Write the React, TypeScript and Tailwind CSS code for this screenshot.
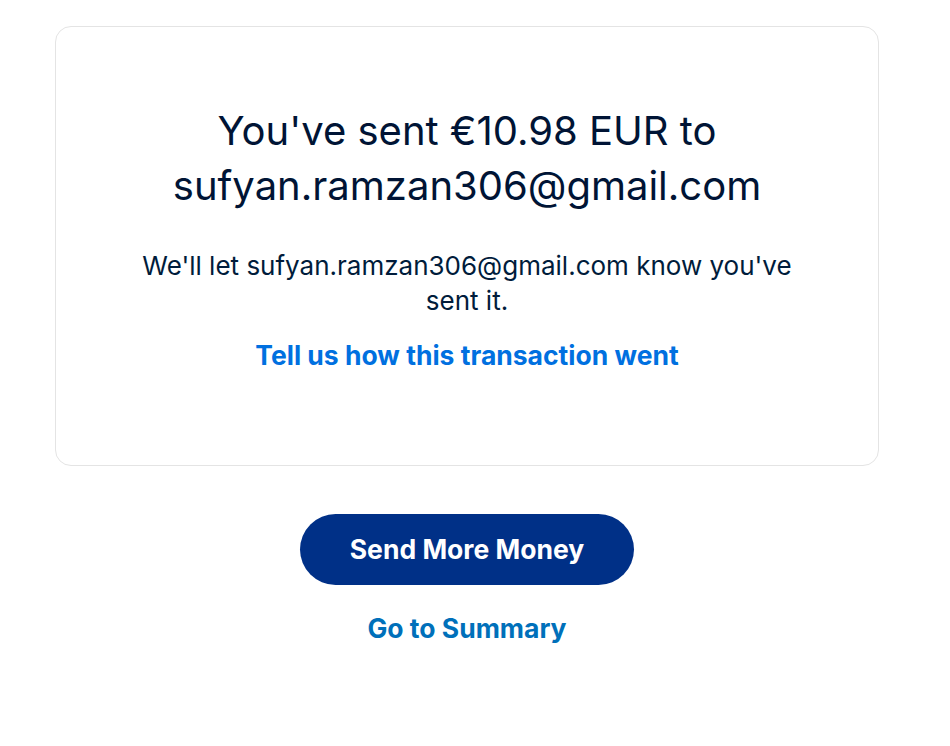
export default function App() {
    return (
        <div className="min-h-[746px] bg-white font-['Inter',_'Liberation_Sans',_sans-serif] text-[#001435]">
            <div className="pt-[26px] pl-[55px] pr-[71px]">
                {/* confirmation card */}
                <div className="rounded-2xl border border-[#e4e4e4] pt-[76px] pb-[94px] px-8 text-center">
                    <h1 className="mx-auto max-w-[660px] text-[40px] leading-[55px] font-normal">
                        You've sent €10.98 EUR to sufyan.ramzan306@gmail.com
                    </h1>
                    <p className="mx-auto mt-[35px] max-w-[680px] text-[26px] leading-[35px] text-[#001c3b]">
                        We'll let sufyan.ramzan306@gmail.com know you've sent it.
                    </p>
                    <a href="#" className="mt-[22px] inline-block text-[26.5px] leading-[30px] font-bold text-[#0070e0]">
                        Tell us how this transaction went
                    </a>
                </div>

                <div className="mt-[48px] flex flex-col items-center">
                    <button className="h-[71px] w-[334px] rounded-full bg-[#003087] text-[26.5px] font-bold text-white">
                        Send More Money
                    </button>
                    <a href="#" className="mt-[28px] text-[26.5px] leading-[30px] font-bold text-[#0070ba]">
                        Go to Summary
                    </a>
                </div>
            </div>
        </div>
    );
}
